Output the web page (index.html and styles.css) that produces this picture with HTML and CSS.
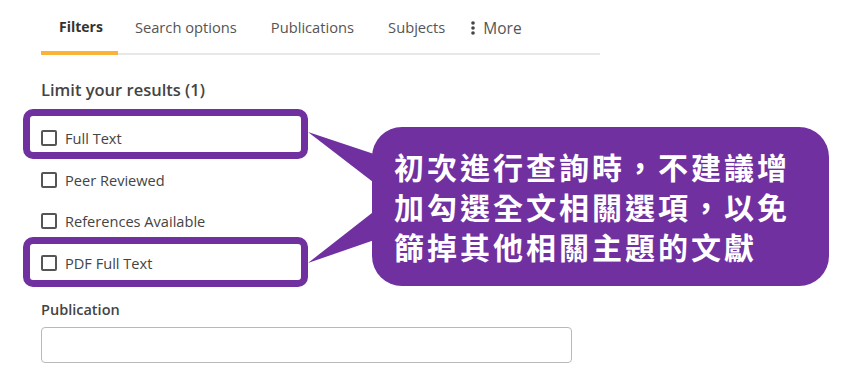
FILE: index.html
```html
<!DOCTYPE html>
<html lang="zh-Hant">
<head>
  <meta charset="UTF-8">
  <title>Filters</title>
  <link rel="stylesheet" href="styles.css">
</head>
<body>
  <div class="panel">
    <nav class="tabs">
      <a class="tab active" href="#">Filters</a>
      <a class="tab" href="#">Search options</a>
      <a class="tab" href="#">Publications</a>
      <a class="tab" href="#">Subjects</a>
      <a class="tab more" href="#">
        <svg width="4" height="14" viewBox="0 0 4 14"><circle cx="2" cy="2" r="1.8"/><circle cx="2" cy="7" r="1.8"/><circle cx="2" cy="12" r="1.8"/></svg>
        More
      </a>
    </nav>

    <h3 class="heading">Limit your results (1)</h3>
    <ul class="limits">
      <li><span class="box"></span>Full Text</li>
      <li><span class="box"></span>Peer Reviewed</li>
      <li><span class="box"></span>References Available</li>
      <li><span class="box"></span>PDF Full Text</li>
    </ul>

    <h3 class="label">Publication</h3>
    <input class="field" type="text">
  </div>

  <!-- annotation drawn over the page -->
  <div class="note">
    <div class="mark mark-top"></div>
    <div class="mark mark-bottom"></div>
    <svg class="tails" width="860" height="385">
      <polygon points="308,132 386,158 386,192"/>
      <polygon points="308,263 386,202 386,236"/>
    </svg>
    <div class="bubble">初次進行查詢時，不建議增<br>加勾選全文相關選項，以免<br>篩掉其他相關主題的文獻</div>
  </div>
</body>
</html>
```

FILE: styles.css
```css
body {
  margin: 0;
  background: #fff;
  font-family: "Open Sans", "Liberation Sans", sans-serif;
  color: #444;
  position: relative;
  height: 385px;
  overflow: hidden;
}

.panel {
  width: 559px;
  padding-left: 41px;
}

.tabs {
  display: flex;
  padding-top: 17px;
  border-bottom: 2px solid #e8e8e8;
}

.tab {
  padding: 0 17px 14px;
  line-height: 20px;
  font-size: 14.7px;
  color: #555;
  text-decoration: none;
  border-bottom: 4px solid transparent;
  margin-bottom: -2px;
}

.tab.active {
  color: #333;
  font-weight: 700;
  font-size: 14px;
  border-bottom-color: #fbb337;
  padding: 0 15px 14px 18px;
}

.tab.more {
  display: flex;
  align-items: center;
  gap: 8px;
  padding-left: 9px;
  font-size: 15.5px;
  position: relative;
  top: 1px;
}

.tab.more svg {
  fill: #444;
}

.heading {
  margin: 25px 0 0;
  font-size: 16.5px;
  font-weight: 600;
  line-height: 20px;
  color: #444;
}

.limits {
  list-style: none;
  margin: 17px 0 0;
  padding: 0;
}

.limits li {
  display: flex;
  align-items: center;
  gap: 8px;
  height: 41.7px;
  font-size: 14.6px;
  color: #444;
}

.box {
  width: 12px;
  height: 12px;
  border: 2px solid #555;
  border-radius: 2px;
}

.label {
  margin: 16px 0 0;
  font-size: 14.5px;
  font-weight: 600;
  line-height: 20px;
  color: #444;
}

.field {
  display: block;
  box-sizing: border-box;
  width: 531px;
  height: 36px;
  margin-top: 7px;
  border: 1px solid #b9b9b9;
  border-radius: 4px;
}

.note {
  position: absolute;
  inset: 0;
  pointer-events: none;
}

.mark {
  position: absolute;
  left: 23px;
  width: 285px;
  height: 50px;
  box-sizing: border-box;
  border: 7px solid #7030a0;
  border-radius: 10px;
}

.mark-top {
  top: 109px;
}

.mark-bottom {
  top: 237px;
}

.tails {
  position: absolute;
  left: 0;
  top: 0;
  fill: #7030a0;
}

.bubble {
  position: absolute;
  left: 372px;
  top: 127px;
  width: 457px;
  height: 159px;
  box-sizing: border-box;
  padding: 19px 0 0 22px;
  background: #7030a0;
  border-radius: 30px;
  color: #fff;
  font-family: "Noto Sans CJK TC", sans-serif;
  font-weight: 700;
  font-size: 30px;
  letter-spacing: 3px;
  line-height: 40px;
}
```
